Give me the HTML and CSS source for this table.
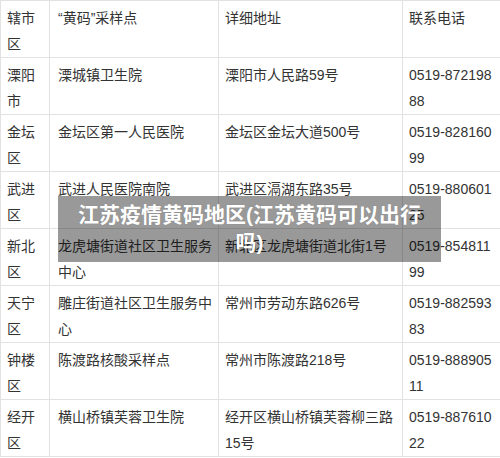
FILE: index.html
```html
<!DOCTYPE html>
<html lang="zh-CN">
<head>
    <meta charset="UTF-8">
    <meta name="viewport" content="width=device-width, initial-scale=1.0">
    <title>江苏疫情黄码地区</title>
    <link rel="stylesheet" href="styles.css">
</head>
<body>
    <div class="page">
        <table class="sites">
            <colgroup>
                <col class="col-area">
                <col class="col-site">
                <col class="col-addr">
                <col class="col-phone">
            </colgroup>
            <tr>
                <td>辖市区</td>
                <td>“黄码”采样点</td>
                <td>详细地址</td>
                <td>联系电话</td>
            </tr>
            <tr>
                <td>溧阳市</td>
                <td>溧城镇卫生院</td>
                <td>溧阳市人民路59号</td>
                <td>0519-87219888</td>
            </tr>
            <tr>
                <td>金坛区</td>
                <td>金坛区第一人民医院</td>
                <td>金坛区金坛大道500号</td>
                <td>0519-82816099</td>
            </tr>
            <tr>
                <td>武进区</td>
                <td>武进人民医院南院</td>
                <td>武进区滆湖东路35号</td>
                <td>0519-88060125</td>
            </tr>
            <tr>
                <td>新北区</td>
                <td>龙虎塘街道社区卫生服务中心</td>
                <td>新北区龙虎塘街道北街1号</td>
                <td>0519-85481199</td>
            </tr>
            <tr>
                <td>天宁区</td>
                <td>雕庄街道社区卫生服务中心</td>
                <td>常州市劳动东路626号</td>
                <td>0519-88259383</td>
            </tr>
            <tr>
                <td>钟楼区</td>
                <td>陈渡路核酸采样点</td>
                <td>常州市陈渡路218号</td>
                <td>0519-88890511</td>
            </tr>
            <tr>
                <td>经开区</td>
                <td>横山桥镇芙蓉卫生院</td>
                <td>经开区横山桥镇芙蓉柳三路15号</td>
                <td>0519-88761022</td>
            </tr>
        </table>

        <!-- title banner over the table -->
        <div class="banner">江苏疫情黄码地区(江苏黄码可以出行吗)</div>
    </div>
</body>
</html>
```

FILE: styles.css
```css
:root {
    --text-color: #333;
    --border-color: #e2e2e2;
    --banner-bg: rgba(0, 0, 0, 0.4);
}
body {
    margin: 0;
    background: #fff;
    color: var(--text-color);
    font-family: 'Liberation Sans', 'Noto Sans CJK SC', sans-serif;
}
.page {
    position: relative;
    width: 500px;
}
.sites {
    width: 500px;
    border-collapse: collapse;
    table-layout: fixed;
    font-size: 14px;
}
.col-area { width: 49px; }
.col-site { width: 169px; }
.col-addr { width: 184px; }
.col-phone { width: 98px; }
.sites td {
    border: 1px solid var(--border-color);
    padding: 4px 6px 0 6px;
    height: 52px;
    line-height: 26px;
    vertical-align: top;
    word-break: break-all;
    box-sizing: border-box;
}
.sites td:nth-child(2) { padding-left: 8px; }

.banner {
    position: absolute;
    left: 58px;
    top: 196px;
    width: 383px;
    height: 66px;
    box-sizing: border-box;
    padding: 5px 20px 0;
    background: var(--banner-bg);
    color: #fff;
    font-size: 21px;
    font-weight: 700;
    line-height: 28px;
    text-align: center;
    text-shadow: 0 0 1px rgba(0, 0, 0, 0.2);
}
```
